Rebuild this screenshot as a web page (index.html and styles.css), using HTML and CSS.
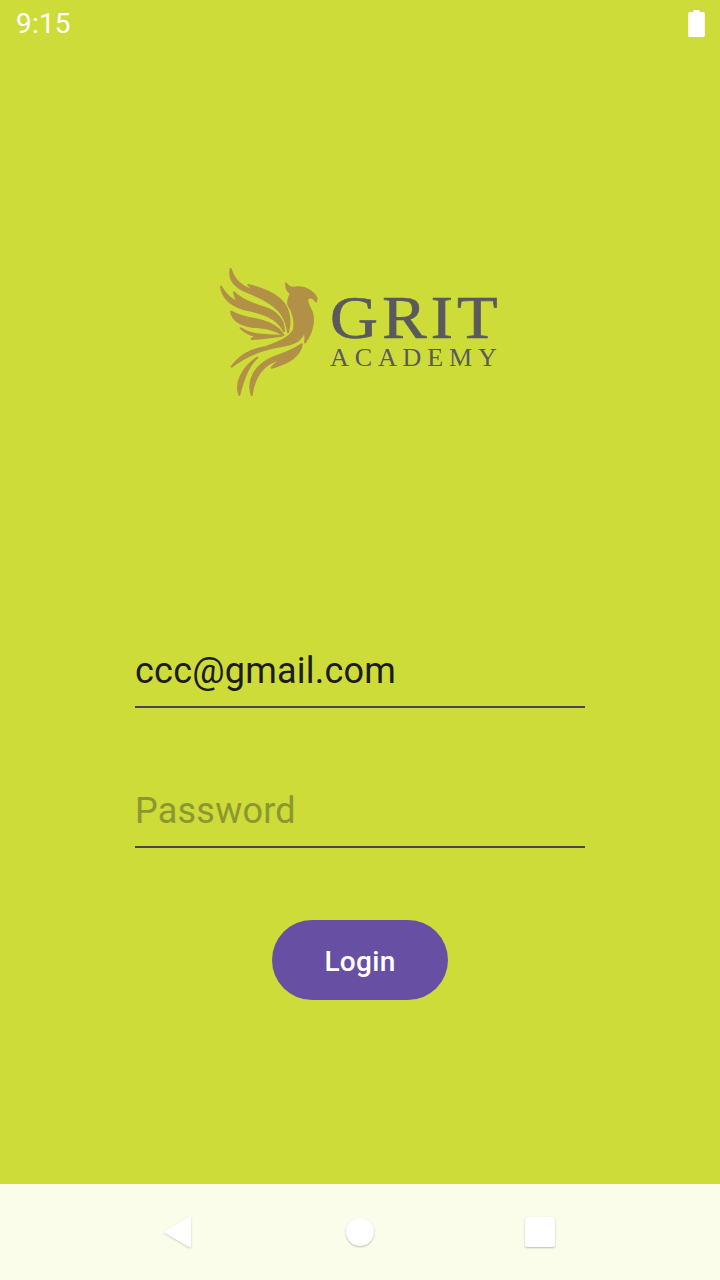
FILE: index.html
```html
<!DOCTYPE html>
<html lang="en">
<head>
<meta charset="utf-8">
<title>Grit Academy Login</title>
<link rel="stylesheet" href="styles.css">
</head>
<body>
<div class="screen">
  <header class="status">
    <span class="time">9:15</span>
    <svg class="battery" width="17" height="27" viewBox="0 0 16 26"><path d="M5 0h6v2h3.500a1.500 1.500 0 0 1 1.500 1.500v21a1.500 1.500 0 0 1-1.500 1.500h-13a1.500 1.500 0 0 1-1.500-1.500v-21a1.500 1.500 0 0 1 1.500-1.500h3.500z" fill="#fff"/></svg>
  </header>
  <main class="content">
    <div class="logo">
      <svg class="bird" width="120" height="150" viewBox="0 0 360 450">
        <g class="bird-shape">
          <path d="M62 42C56 72 72 92 100 106C130 120 190 140 215 178C225 195 232 215 234 232C240 210 242 180 225 150C205 120 165 102 115 90L135 107C105 100 75 85 62 42Z"/>
          <path d="M33 95C38 130 60 150 100 162C150 172 200 185 222 228C222 195 200 170 165 158C130 148 95 135 72 112C75 125 78 135 85 142C65 135 48 120 33 95Z"/>
          <path d="M63 170C68 195 90 210 125 215C165 218 195 222 220 240C205 215 175 200 135 192C110 188 85 182 63 170Z"/>
          <path d="M92 220C115 235 135 240 215 242C195 245 165 250 125 252L140 244C120 240 105 232 92 220Z"/>
          <path d="M65 335C90 300 120 285 170 275C200 265 235 250 250 228C258 205 250 170 235 150C232 135 240 120 242 115C232 110 228 98 228 85C235 98 250 100 262 97C285 94 312 112 320 130L318 140C312 130 305 127 298 128C285 130 295 150 305 170C315 200 305 235 285 262C288 245 285 235 282 232C275 250 262 262 240 268C200 275 130 285 65 335Z"/>
          <path d="M88 420C75 385 95 340 142 308C115 330 100 370 88 420Z"/>
          <path d="M125 420C112 380 130 330 195 305C225 295 250 285 275 268C272 295 250 320 185 338C195 325 205 320 215 312C180 318 135 345 125 420Z"/>
        </g>
      </svg>
      <div class="wordmark">
        <div class="grit">GRIT</div>
        <div class="academy">ACADEMY</div>
      </div>
    </div>
    <form class="form">
      <div class="field"><span class="value">ccc@gmail.com</span></div>
      <div class="field"><span class="placeholder">Password</span></div>
      <button class="login" type="button">Login</button>
    </form>
  </main>
  <nav class="navbar">
    <svg class="nav-icon" width="32" height="34" viewBox="0 0 32 34"><path d="M28 2.500V31a1.500 1.500 0 0 1-2 1L2 18a1 1 0 0 1 0-2L26 1.500a1.500 1.500 0 0 1 2 1z" fill="#fff"/></svg>
    <span class="nav-circle"></span>
    <span class="nav-square"></span>
  </nav>
</div>
</body>
</html>
```
FILE: styles.css
```css
* { box-sizing: border-box; }
html, body { margin: 0; padding: 0; }
body { width: 720px; height: 1280px; overflow: hidden; font-family: Roboto, sans-serif; }
.screen { width: 720px; height: 1280px; display: flex; flex-direction: column; background: #cddc39; }
.status { height: 48px; flex: none; display: flex; align-items: center; justify-content: space-between; padding: 0 15px 0 16px; color: #fff; }
.time { font-size: 28px; line-height: 48px; letter-spacing: 0.2px; }
.battery { display: block; margin-top: -2px; }
.content { flex: 1; display: flex; flex-direction: column; align-items: center; }
.logo { display: flex; align-items: flex-start; margin-top: 207px; margin-right: 10px; width: 290px; height: 150px; }
.bird { flex: none; display: block; }
.bird-shape { fill: #b29146; stroke: #b29146; stroke-width: 6; stroke-linejoin: round; }
.wordmark { padding-top: 33px; color: #5a5a5e; font-family: "Liberation Serif", serif; }
.grit { font-size: 62px; line-height: 58px; letter-spacing: 4px; -webkit-text-stroke: 0.7px #5a5a5e; white-space: nowrap; transform: scaleX(1.07); transform-origin: left center; }
.academy { font-size: 26px; line-height: 26px; letter-spacing: 5.9px; margin-top: -1px; white-space: nowrap; }
.form { margin-top: 233px; width: 450px; display: flex; flex-direction: column; align-items: center; }
.field { width: 100%; height: 70px; margin-bottom: 70px; border-bottom: 2px solid #49454f; font-size: 36px; line-height: 66px; letter-spacing: 0.22px; }
.field:nth-child(2) { margin-bottom: 72px; }
.value { color: #1c1b1f; }
.placeholder { color: #8c9731; }
.login { width: 176px; height: 80px; border: 0; border-radius: 40px; background: #6750a4; color: #fff; font: 500 28px/80px Roboto, sans-serif; letter-spacing: 0.3px; padding: 2px 0 0; }
.navbar { height: 96px; flex: none; background: #f9fdea; display: flex; align-items: center; position: relative; }
.nav-icon { position: absolute; left: 163px; top: 31px; filter: drop-shadow(0 1px 1px rgba(0,0,0,.18)); }
.nav-circle { position: absolute; left: 346px; top: 34px; width: 28px; height: 28px; border-radius: 50%; background: #fff; box-shadow: 0 1px 2px rgba(0,0,0,.25); }
.nav-square { position: absolute; left: 525px; top: 33px; width: 30px; height: 30px; border-radius: 2px; background: #fff; box-shadow: 0 1px 2px rgba(0,0,0,.25); }
```
